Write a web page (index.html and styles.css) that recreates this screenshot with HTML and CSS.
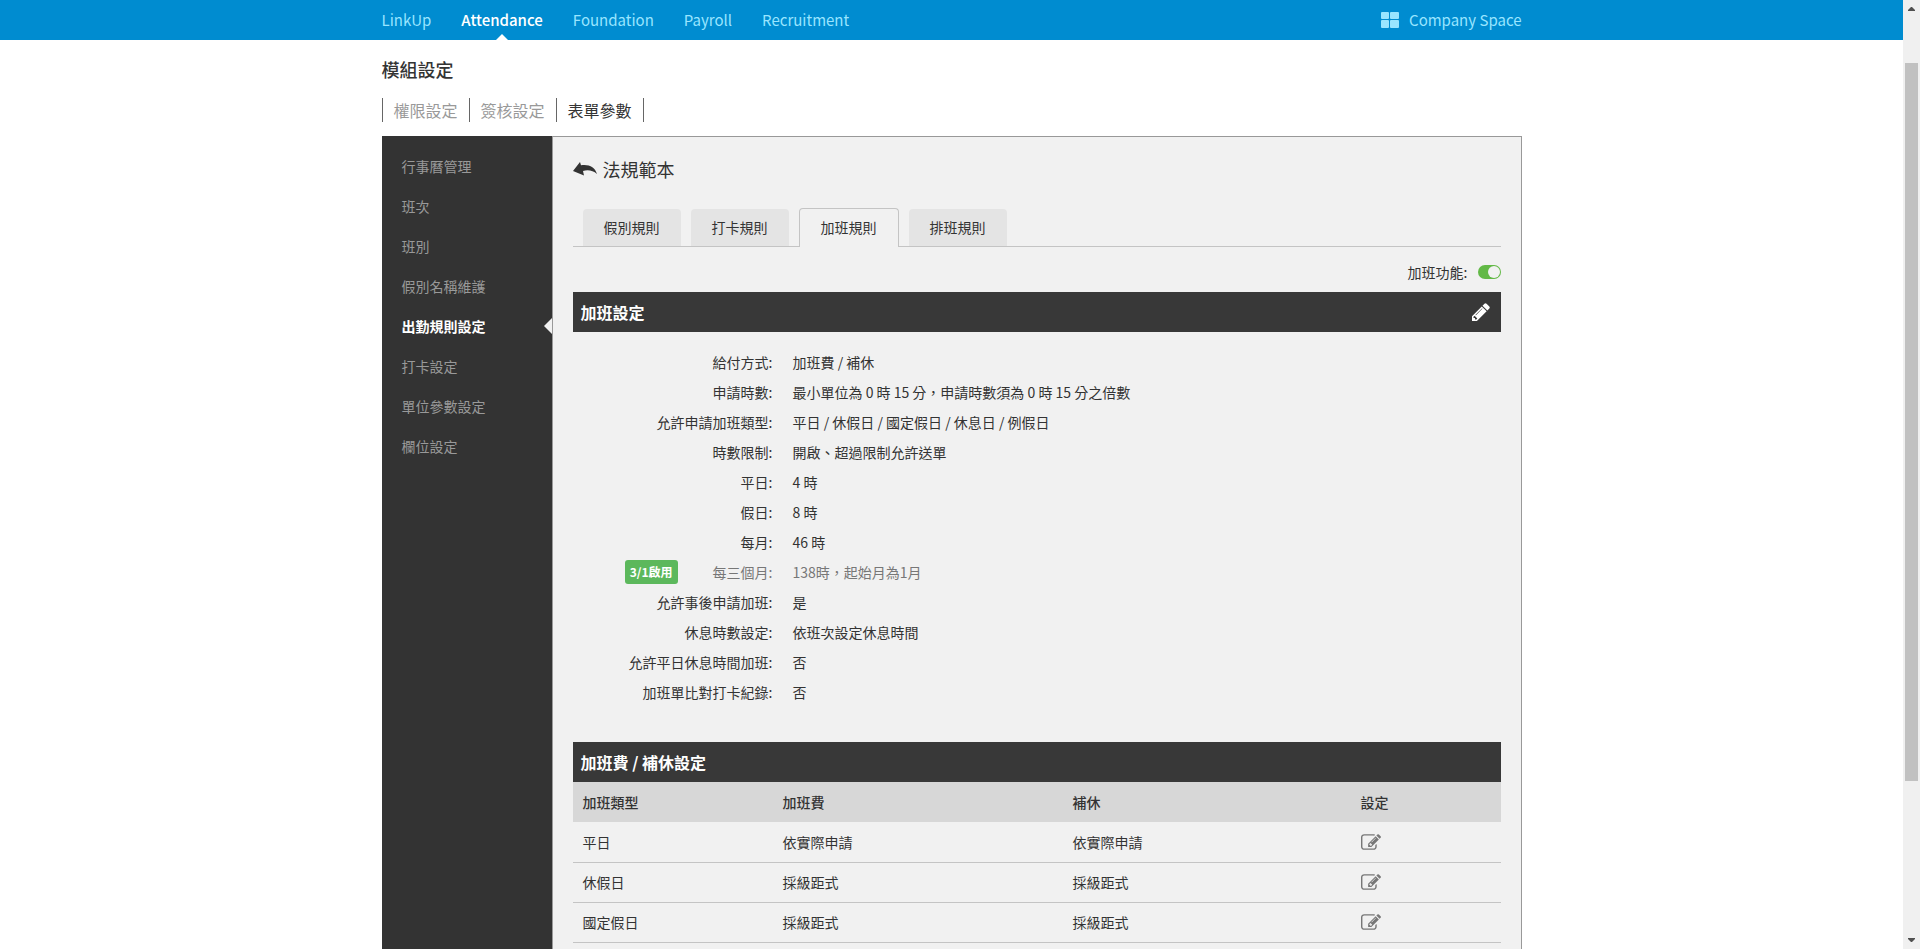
FILE: index.html
```html
<!DOCTYPE html>
<html lang="zh-Hant">
<head>
<meta charset="utf-8">
<title>模組設定</title>
<link rel="stylesheet" href="styles.css">
</head>
<body>
<svg class="sprite" aria-hidden="true">
  <symbol id="pencil" viewBox="0 0 1536 1536">
    <path d="M363 1408l91-91-235-235-91 91v107h128v128h107zM886 480q0-22-22-22-10 0-17 7l-542 542q-7 7-7 17 0 22 22 22 10 0 17-7l542-542q7-7 7-17zM832 288l416 416-832 832H0v-416zM1515 384q0 53-37 90l-166 166-416-416 166-165q36-38 90-38 53 0 91 38l235 234q37 39 37 91z"/>
  </symbol>
  <symbol id="edit" viewBox="0 128 1792 1408">
    <path d="M888 1184l116-116-152-152-116 116v56h96v96h56zM1328 464q-16-16-33 1L945 815q-17 17-1 33t33-1l350-350q17-17 1-33zM1408 1058v190q0 119-84.500 203.500T1120 1536H288q-119 0-203.500-84.500T0 1248V416q0-119 84.500-203.500T288 128h832q63 0 117 25 15 7 18 23 3 17-9 29l-49 49q-14 14-32 8-23-6-45-6H288q-66 0-113 47t-47 113v832q0 66 47 113t113 47h832q66 0 113-47t47-113v-126q0-13 9-22l64-64q15-15 35-7t20 29zM1312 320l288 288-672 672H640V992zM1756 452l-92 92-288-288 92-92q28-28 68-28t68 28l152 152q28 28 28 68t-28 68z"/>
  </symbol>
</svg>
<div class="page">
  <header class="topbar">
    <div class="container topbar-row">
      <nav class="modules">
        <a href="#">LinkUp</a>
        <a href="#" class="current">Attendance</a>
        <a href="#">Foundation</a>
        <a href="#">Payroll</a>
        <a href="#">Recruitment</a>
      </nav>
      <a href="#" class="space">
        <svg class="grid-icon" viewBox="0 0 18 16" aria-hidden="true"><rect width="8" height="7" rx="1"/><rect x="9" width="9" height="7" rx="1"/><rect y="8" width="8" height="8" rx="1"/><rect x="9" y="8" width="9" height="8" rx="1"/></svg>
        Company Space
      </a>
    </div>
  </header>
  <main class="container main">
    <h1 class="title">模組設定</h1>
    <nav class="subnav">
      <a href="#">權限設定</a>
      <a href="#">簽核設定</a>
      <a href="#" class="current">表單參數</a>
    </nav>
    <div class="panel">
      <nav class="sidebar">
        <a href="#">行事曆管理</a>
        <a href="#">班次</a>
        <a href="#">班別</a>
        <a href="#">假別名稱維護</a>
        <a href="#" class="current">出勤規則設定</a>
        <a href="#">打卡設定</a>
        <a href="#">單位參數設定</a>
        <a href="#">欄位設定</a>
      </nav>
      <section class="content">
        <h2 class="heading">
          <a href="#" class="back" aria-label="返回"><svg viewBox="0 0 24 14" aria-hidden="true"><path d="M0 9 7 0l1 3.200C16 2 22 5 24 12 20 8.500 15 7.500 10 9l1 4.500z"/></svg></a>
          法規範本
        </h2>
        <nav class="tabs">
          <a href="#">假別規則</a>
          <a href="#">打卡規則</a>
          <a href="#" class="current">加班規則</a>
          <a href="#">排班規則</a>
        </nav>
        <div class="toggle-row">
          <label for="overtime">加班功能:</label>
          <input type="checkbox" role="switch" id="overtime" class="switch" checked>
        </div>
        <h3 class="bar">加班設定
          <button type="button" class="bar-edit" aria-label="編輯"><svg aria-hidden="true"><use href="#pencil"/></svg></button>
        </h3>
        <dl class="details">
          <dt>給付方式:</dt><dd>加班費 / 補休</dd>
          <dt>申請時數:</dt><dd>最小單位為 0 時 15 分，申請時數須為 0 時 15 分之倍數</dd>
          <dt>允許申請加班類型:</dt><dd>平日 / 休假日 / 國定假日 / 休息日 / 例假日</dd>
          <dt>時數限制:</dt><dd>開啟、超過限制允許送單</dd>
          <dt>平日:</dt><dd>4 時</dd>
          <dt>假日:</dt><dd>8 時</dd>
          <dt>每月:</dt><dd>46 時</dd>
          <dt class="pending"><span class="badge">3/1啟用</span>每三個月:</dt><dd class="pending">138時，起始月為1月</dd>
          <dt>允許事後申請加班:</dt><dd>是</dd>
          <dt>休息時數設定:</dt><dd>依班次設定休息時間</dd>
          <dt>允許平日休息時間加班:</dt><dd>否</dd>
          <dt>加班單比對打卡紀錄:</dt><dd>否</dd>
        </dl>
        <h3 class="bar">加班費 / 補休設定</h3>
        <table class="rates">
          <colgroup><col class="col-type"><col class="col-pay"><col class="col-leave"><col></colgroup>
          <thead>
            <tr><th>加班類型</th><th>加班費</th><th>補休</th><th>設定</th></tr>
          </thead>
          <tbody>
            <tr><td>平日</td><td>依實際申請</td><td>依實際申請</td><td><button type="button" class="row-edit" aria-label="編輯平日"><svg aria-hidden="true"><use href="#edit"/></svg></button></td></tr>
            <tr><td>休假日</td><td>採級距式</td><td>採級距式</td><td><button type="button" class="row-edit" aria-label="編輯休假日"><svg aria-hidden="true"><use href="#edit"/></svg></button></td></tr>
            <tr><td>國定假日</td><td>採級距式</td><td>採級距式</td><td><button type="button" class="row-edit" aria-label="編輯國定假日"><svg aria-hidden="true"><use href="#edit"/></svg></button></td></tr>
          </tbody>
        </table>
      </section>
    </div>
  </main>
</div>
<div class="scrollbar" aria-hidden="true">
  <svg class="arrow" viewBox="0 0 7 4"><path d="M3 0h1l3 3v1H0V3z"/></svg>
  <div class="track"><div class="thumb"></div></div>
  <svg class="arrow" viewBox="0 0 7 4"><path d="M0 0h7v1L4 4H3L0 1z"/></svg>
</div>
</body>
</html>
```
FILE: styles.css
```css
* {
  box-sizing: border-box;
}

body {
  display: flex;
  height: 100vh;
  margin: 0;
  overflow: hidden;
  background: #fff;
  color: #333;
  font: 14px/20px "Noto Sans CJK TC", "Noto Sans", sans-serif;
}

a {
  color: inherit;
  text-decoration: none;
}

button {
  display: block;
  padding: 0;
  border: 0;
  background: none;
  color: inherit;
  cursor: pointer;
}

svg {
  display: block;
  fill: currentColor;
}

.sprite {
  position: absolute;
  width: 0;
  height: 0;
}

.page {
  display: flex;
  flex: 1;
  flex-direction: column;
  min-width: 0;
  overflow: hidden;
}

.container {
  width: 100%;
  max-width: 1140px;
  margin: 0 auto;
}

.topbar {
  flex: none;
  background: #008cd0;
  color: #99e5ff;
  font-size: 15px;
  line-height: 40px;
}

.topbar-row,
.modules,
.space {
  display: flex;
}

.topbar-row {
  justify-content: space-between;
}

.modules {
  gap: 30px;
}

.modules .current {
  position: relative;
  color: #fff;
  font-weight: 500;
}

.modules .current::after {
  content: "";
  position: absolute;
  bottom: 0;
  left: 50%;
  margin-left: -6px;
  border: 6px solid transparent;
  border-top: 0;
  border-bottom-color: #fff;
}

.space {
  align-items: center;
  gap: 10px;
}

.grid-icon {
  width: 18px;
  height: 16px;
}

.main {
  display: flex;
  flex: 1;
  flex-direction: column;
}

.title {
  margin: 16px 0;
  font-size: 18px;
  font-weight: 500;
  line-height: 26px;
}

.subnav {
  display: flex;
  margin-bottom: 14px;
  color: #999;
  font-size: 16px;
  line-height: 24px;
}

.subnav a {
  padding: 0 11px;
  border-right: 1px solid #666;
}

.subnav a:first-child {
  border-left: 1px solid #666;
}

.subnav .current {
  color: #333;
}

.panel {
  display: flex;
  flex: 1;
}

.sidebar {
  flex: none;
  width: 170px;
  padding-top: 10px;
  background: #333;
  color: #999;
  line-height: 40px;
}

.sidebar a {
  display: block;
  padding-left: 20px;
}

.sidebar .current {
  position: relative;
  color: #fff;
  font-weight: bold;
}

.sidebar .current::after {
  content: "";
  position: absolute;
  top: 12px;
  right: 0;
  border: 8px solid transparent;
  border-left: 0;
  border-right-color: #f1f1f1;
}

.content {
  flex: 1;
  min-width: 0;
  padding: 19px 20px;
  border: 1px solid #999;
  border-bottom: 0;
  background: #f1f1f1;
}

.heading {
  display: flex;
  align-items: center;
  gap: 6px;
  margin: 0 0 26px;
  font-size: 18px;
  font-weight: normal;
  line-height: 26px;
}

.back svg {
  width: 24px;
  height: 14px;
}

.tabs {
  display: flex;
  align-items: flex-end;
  gap: 10px;
  padding: 0 10px;
  border-bottom: 1px solid #c4c4c4;
  line-height: 37px;
}

.tabs a {
  padding: 0 21px;
  border-radius: 4px 4px 0 0;
  background: #e4e4e4;
}

.tabs .current {
  margin-bottom: -1px;
  padding-bottom: 1px;
  border: 1px solid #c4c4c4;
  border-bottom: 0;
  background: #f1f1f1;
}

.toggle-row {
  display: flex;
  align-items: center;
  justify-content: flex-end;
  gap: 10px;
  padding: 15px 0 10px;
}

.switch {
  appearance: none;
  width: 23px;
  height: 14px;
  margin: 0;
  padding: 1px;
  border-radius: 7px;
  background: #999;
}

.switch::before {
  content: "";
  display: block;
  width: 12px;
  height: 12px;
  border-radius: 6px;
  background: #f1f1f1;
}

.switch:checked {
  background: #62b946;
}

.switch:checked::before {
  margin-left: auto;
}

.bar {
  display: flex;
  align-items: center;
  justify-content: space-between;
  margin: 0;
  padding: 0 11px 0 8px;
  background: #383838;
  color: #fff;
  font-size: 16px;
  line-height: 40px;
}

.bar-edit svg {
  width: 18px;
  height: 18px;
}

.details {
  display: grid;
  grid-template-columns: 200px 1fr;
  column-gap: 20px;
  margin: 0;
  padding: 15px 0 35px;
  line-height: 30px;
}

.details dt {
  display: flex;
  align-items: center;
  justify-content: flex-end;
}

.details dd {
  margin: 0;
}

.details .pending {
  color: #777;
}

.badge {
  margin-right: 35px;
  padding: 0 5px;
  border-radius: 3px;
  background: #5cb85c;
  color: #fff;
  font-size: 12px;
  font-weight: bold;
  line-height: 24px;
}

.rates {
  width: 100%;
  border-collapse: collapse;
  table-layout: fixed;
}

.col-type {
  width: 200px;
}

.col-pay {
  width: 290px;
}

.col-leave {
  width: 288px;
}

.rates th,
.rates td {
  height: 40px;
  padding: 0 10px;
  text-align: left;
}

.rates th {
  background: #d7d7d7;
  font-weight: 500;
}

.rates td {
  border-bottom: 1px solid #c4c4c4;
}

.row-edit {
  color: #777;
}

.row-edit svg {
  width: 20px;
  height: 16px;
}

.scrollbar {
  display: flex;
  flex: none;
  flex-direction: column;
  align-items: center;
  width: 17px;
  padding: 7px 0;
  background: #f0f0f0;
  color: #505050;
}

.arrow {
  flex: none;
  width: 7px;
  height: 4px;
}

.track {
  flex: 1;
  width: 13px;
  padding-top: 52px;
}

.thumb {
  height: 82%;
  background: #c1c1c1;
}
```
